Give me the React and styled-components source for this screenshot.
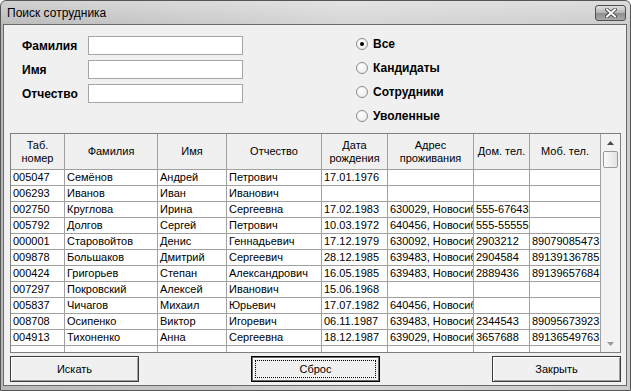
import React from 'react';
import styled, { createGlobalStyle, css } from 'styled-components';

const GlobalStyle = createGlobalStyle`
  html, body { margin: 0; padding: 0; }
  body {
    width: 631px; height: 391px; overflow: hidden; background: #ffffff;
    font-family: "Liberation Sans", Arial, sans-serif;
  }
  * { box-sizing: border-box; }
`;

const Window = styled.div`
  width: 631px;
  height: 391px;
  border: 1px solid #555555;
  border-radius: 6px 6px 0 0;
  background: linear-gradient(to right, #b8b8b8, #d4d4d4 55%, #cbcbcb);
  display: flex;
  flex-direction: column;
  overflow: hidden;
`;

const TitleBar = styled.div`
  height: 23px;
  flex: none;
  display: flex;
  align-items: center;
  justify-content: space-between;
  padding: 0 4px 0 6px;
  background: linear-gradient(to bottom, rgba(255,255,255,0.35), rgba(255,255,255,0.05));
`;

const Title = styled.span`
  font-family: "Liberation Sans", Arial, sans-serif;
  font-size: 12px;
  color: #000;
`;

const CloseButton = styled.div`
  width: 31px;
  height: 16px;
  border: 1px solid #505050;
  border-radius: 3px;
  background: linear-gradient(to bottom, #e0e0e0, #b4b4b4 48%, #8e8e8e 52%, #a8a8a8);
  display: flex;
  align-items: center;
  justify-content: center;
  margin-top: 1px;
`;

const Client = styled.div`
  flex: 1;
  margin: 0 3px 4px 2px;
  border: 1px solid #6a6a6a;
  background: #f0f0f0;
  display: flex;
  flex-direction: column;
`;

const TopSection = styled.div`
  height: 108px;
  flex: none;
  display: flex;
  padding: 7px 0 0 18px;
`;

const FormGrid = styled.div`
  display: grid;
  grid-template-columns: 66px 155px;
  grid-auto-rows: 19px;
  row-gap: 5px;
  align-items: center;
  margin-top: 4px;
  align-self: flex-start;
`;

const BoldLabel = styled.span`
  font-size: 12px;
  font-weight: bold;
  color: #000;
`;

const TextBox = styled.div`
  height: 19px;
  border: 1px solid #a5a5a5;
  background: #ffffff;
`;

const RadioGroup = styled.div`
  display: flex;
  flex-direction: column;
  margin-left: 113px;
  align-self: flex-start;
`;

const RadioRow = styled.div`
  height: 24px;
  display: flex;
  align-items: center;
  gap: 5px;
`;

const RadioCircle = styled.span`
  width: 12px;
  height: 12px;
  border-radius: 50%;
  border: 1px solid #8c8c8c;
  background: radial-gradient(circle at 40% 35%, #ffffff, #e6e6e6);
  display: flex;
  align-items: center;
  justify-content: center;
  &::after {
    content: "";
    width: 4px;
    height: 4px;
    border-radius: 50%;
    background: ${p => (p.$checked ? '#000' : 'transparent')};
  }
`;

const GridFrame = styled.div`
  margin-left: 6px;
  width: 611px;
  height: 220px;
  flex: none;
  border: 1px solid #7f7f7f;
  display: flex;
  background: #ffffff;
`;

const TableArea = styled.div`
  width: 590px;
  overflow: hidden;
  display: flex;
  flex-direction: column;
`;

const COLS = '54px 93px 69px 95px 66px 86px 56px 71px';

const HeaderRow = styled.div`
  display: grid;
  grid-template-columns: ${COLS};
  height: 36px;
  flex: none;
`;

const HeaderCell = styled.div`
  border-right: 1px solid #a0a0a0;
  border-bottom: 1px solid #a0a0a0;
  background: #f0f0f0;
  display: flex;
  align-items: center;
  justify-content: center;
  text-align: center;
  font-size: 11px;
  line-height: 13px;
  color: #000;
  white-space: pre-line;
`;

const DataRow = styled.div`
  display: grid;
  grid-template-columns: ${COLS};
  height: 16px;
  flex: none;
`;

const Cell = styled.div`
  border-right: 1px solid #a0a0a0;
  border-bottom: 1px solid #a0a0a0;
  padding: 0 2px;
  font-size: 11px;
  line-height: 15px;
  color: #000;
  white-space: nowrap;
  overflow: hidden;
`;

const ScrollBar = styled.div`
  width: 19px;
  display: flex;
  flex-direction: column;
  background: #f2f2f2;
`;

const ScrollArrow = styled.div`
  height: 17px;
  flex: none;
  display: flex;
  align-items: center;
  justify-content: center;
`;

const ScrollThumb = styled.div`
  height: 17px;
  flex: none;
  margin: 0 2px;
  border: 1px solid #9a9a9a;
  border-radius: 2px;
  background: linear-gradient(to right, #fbfbfb, #e2e2e2);
`;

const ScrollTrack = styled.div`
  flex: 1;
`;

const ButtonRow = styled.div`
  display: flex;
  justify-content: space-between;
  padding: 3px 5px 0 6px;
`;

const Button = styled.div`
  position: relative;
  width: 129px;
  height: 26px;
  display: flex;
  align-items: center;
  justify-content: center;
  font-size: 11px;
  color: #000;
  background: #f0f0f0;
  border: 1px solid #3c3c3c;
  box-shadow: inset 1px 1px #ffffff, inset -1px -1px #a0a0a0;
  ${p => p.$default && css`
    border: 1px solid #000;
    box-shadow: inset 0 0 0 1px #6a6a6a, inset 2px 2px #ffffff;
    &::after {
      content: "";
      position: absolute;
      inset: 3px;
      border: 1px dotted #000;
    }
  `}
`;

const headers = ['Таб.\nномер', 'Фамилия', 'Имя', 'Отчество', 'Дата\nрождения', 'Адрес\nпроживания', 'Дом. тел.', 'Моб. тел.'];

const rows = [
  ['005047', 'Семёнов', 'Андрей', 'Петрович', '17.01.1976', '', '', ''],
  ['006293', 'Иванов', 'Иван', 'Иванович', '', '', '', ''],
  ['002750', 'Круглова', 'Ирина', 'Сергеевна', '17.02.1983', '630029, Новосибирск', '555-6764321', ''],
  ['005792', 'Долгов', 'Сергей', 'Петрович', '10.03.1972', '640456, Новосибирск', '555-5555555', ''],
  ['000001', 'Старовойтов', 'Денис', 'Геннадьевич', '17.12.1979', '630092, Новосибирск', '2903212', '89079085473'],
  ['009878', 'Большаков', 'Дмитрий', 'Сергеевич', '28.12.1985', '639483, Новосибирск', '2904584', '89139136785'],
  ['000424', 'Григорьев', 'Степан', 'Александрович', '16.05.1985', '639483, Новосибирск', '2889436', '89139657684'],
  ['007297', 'Покровский', 'Алексей', 'Иванович', '15.06.1968', '', '', ''],
  ['005837', 'Чичагов', 'Михаил', 'Юрьевич', '17.07.1982', '640456, Новосибирск', '', ''],
  ['008708', 'Осипенко', 'Виктор', 'Игоревич', '06.11.1987', '639483, Новосибирск', '2344543', '89095673923'],
  ['004913', 'Тихоненко', 'Анна', 'Сергеевна', '18.12.1987', '639029, Новосибирск', '3657688', '89136549763'],
  ['', '', '', '', '', '', '', ''],
];

const radios = [
  { label: 'Все', checked: true },
  { label: 'Кандидаты' },
  { label: 'Сотрудники' },
  { label: 'Уволенные' },
];

export default function App() {
  return (
    <>
      <GlobalStyle />
      <Window>
        <TitleBar>
          <Title>Поиск сотрудника</Title>
          <CloseButton>
            <svg width="12" height="10" viewBox="0 0 12 10">
              <path d="M2 1.5 L10 8.5 M10 1.5 L2 8.5" stroke="#3a3a3a" strokeWidth="3.6" strokeLinecap="square" />
              <path d="M2 1.5 L10 8.5 M10 1.5 L2 8.5" stroke="#ffffff" strokeWidth="2" strokeLinecap="square" />
            </svg>
          </CloseButton>
        </TitleBar>
        <Client>
          <TopSection>
            <FormGrid>
              <BoldLabel>Фамилия</BoldLabel>
              <TextBox />
              <BoldLabel>Имя</BoldLabel>
              <TextBox />
              <BoldLabel>Отчество</BoldLabel>
              <TextBox />
            </FormGrid>
            <RadioGroup>
              {radios.map(r => (
                <RadioRow key={r.label}>
                  <RadioCircle $checked={r.checked} />
                  <BoldLabel>{r.label}</BoldLabel>
                </RadioRow>
              ))}
            </RadioGroup>
          </TopSection>
          <GridFrame>
            <TableArea>
              <HeaderRow>
                {headers.map(h => <HeaderCell key={h}>{h}</HeaderCell>)}
              </HeaderRow>
              {rows.map((r, i) => (
                <DataRow key={i}>
                  {r.map((c, j) => <Cell key={j}>{c}</Cell>)}
                </DataRow>
              ))}
            </TableArea>
            <ScrollBar>
              <ScrollArrow>
                <svg width="7" height="4" viewBox="0 0 7 4"><path d="M0 4 L3.5 0 L7 4 Z" fill="#4a4a4a" /></svg>
              </ScrollArrow>
              <ScrollThumb />
              <ScrollTrack />
              <ScrollArrow>
                <svg width="7" height="4" viewBox="0 0 7 4"><path d="M0 0 L3.5 4 L7 0 Z" fill="#9a9a9a" /></svg>
              </ScrollArrow>
            </ScrollBar>
          </GridFrame>
          <ButtonRow>
            <Button>Искать</Button>
            <Button $default>Сброс</Button>
            <Button>Закрыть</Button>
          </ButtonRow>
        </Client>
      </Window>
    </>
  );
}
